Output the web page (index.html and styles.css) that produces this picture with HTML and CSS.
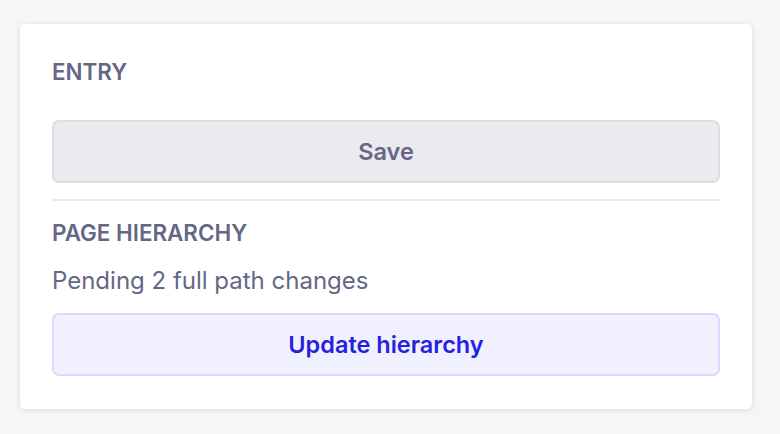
FILE: index.html
```html
<!DOCTYPE html>
<html lang="en">
<head>
<meta charset="utf-8">
<title>Entry</title>
<link rel="stylesheet" href="styles.css">
</head>
<body>
<div class="page">
  <aside class="card">
    <section class="group">
      <h2 class="sigma">Entry</h2>
      <button class="btn btn-tertiary" type="button">Save</button>
    </section>
    <hr class="divider">
    <section class="group group-hierarchy">
      <h2 class="sigma">Page hierarchy</h2>
      <p class="omega">Pending 2 full path changes</p>
      <button class="btn btn-secondary" type="button">Update hierarchy</button>
    </section>
  </aside>
</div>
</body>
</html>
```
FILE: styles.css
```css
* { box-sizing: border-box; }
html, body {
  margin: 0;
  padding: 0;
  background: #f6f6f9;
  font-family: Inter, "Noto Sans", "Liberation Sans", sans-serif;
}
.page {
  padding: 24px 28px 25px 20px;
}
.card {
  width: 732px;
  background: #ffffff;
  border-radius: 5px;
  box-shadow: 0 1px 6px rgba(33, 33, 52, 0.12);
  padding: 34px 32px 33px 32px;
  display: flex;
  flex-direction: column;
}
.group {
  display: flex;
  flex-direction: column;
}
.sigma {
  margin: 0;
  font-size: 22.4px;
  line-height: 28px;
  font-weight: 600;
  text-transform: uppercase;
  color: #666687;
}
.group .sigma { margin-bottom: 34px; }
.group-hierarchy .sigma { margin-bottom: 18px; }
.omega {
  margin: 0 0 16px;
  font-size: 24px;
  line-height: 32px;
  color: #666687;
}
.btn {
  width: 100%;
  height: 63px;
  border-radius: 7px;
  font-family: inherit;
  font-size: 23.5px;
  font-weight: 600;
  cursor: pointer;
}
.btn-tertiary {
  background: #eaeaef;
  border: 2px solid #dcdce4;
  color: #666687;
}
.btn-secondary {
  background: #f0f0ff;
  border: 2px solid #d9d8ff;
  color: #271fe0;
}
.divider {
  margin: 16px 0 18px;
  border: 0;
  height: 2px;
  background: #eaeaef;
}
```
